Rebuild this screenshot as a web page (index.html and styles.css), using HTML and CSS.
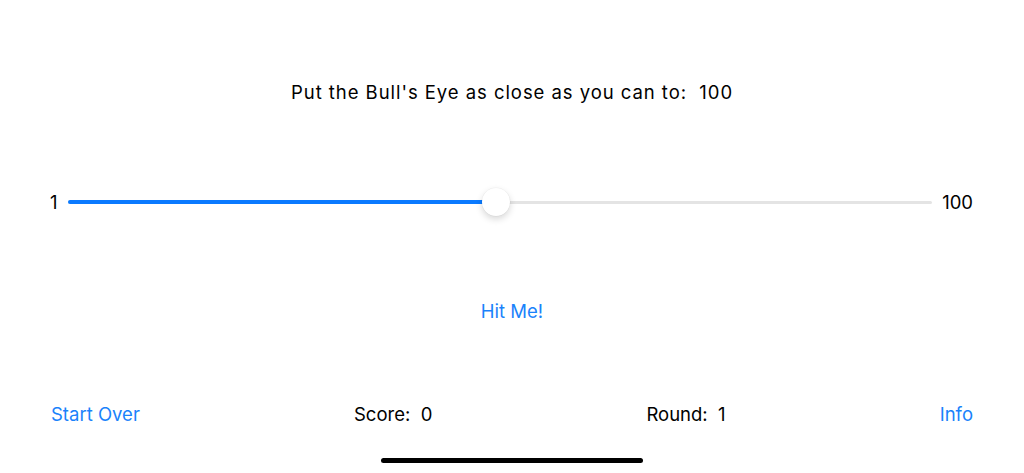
FILE: index.html
```html
<!DOCTYPE html>
<html>
<head>
<meta charset="utf-8">
<link rel="stylesheet" href="styles.css">
</head>
<body>
<div class="screen">
  <div class="title">Put the Bull's Eye as close as you can to:&nbsp; 100</div>
  <div class="slider-row">
    <span class="bound">1</span>
    <div class="track">
      <div class="fill" style="width: 49.5%"></div>
      <div class="thumb" style="left: 49.5%"></div>
    </div>
    <span class="bound">100</span>
  </div>
  <div class="hit">Hit Me!</div>
  <div class="bottom">
    <span class="link">Start Over</span>
    <span class="stat">Score:&nbsp; 0</span>
    <span class="stat">Round:&nbsp; 1</span>
    <span class="link">Info</span>
  </div>
  <div class="home"></div>
</div>
</body>
</html>
```
FILE: styles.css
```css
html, body {
  margin: 0;
  padding: 0;
  background: #ffffff;
}
.screen {
  width: 1024px;
  height: 473px;
  display: flex;
  flex-direction: column;
  font-family: Inter, "Liberation Sans", sans-serif;
  color: #000;
  overflow: hidden;
}
.title {
  margin-top: 80px;
  height: 24px;
  line-height: 24px;
  font-size: 18.5px;
  letter-spacing: 0.95px;
  text-align: center;
}
.slider-row {
  margin-top: 83px;
  height: 30px;
  padding: 0 51px 0 50px;
  display: flex;
  align-items: center;
  gap: 10px;
  font-size: 18.5px;
}
.bound {
  line-height: 30px;
}
.track {
  flex: 1;
  height: 3px;
  background: #e4e4e4;
  border-radius: 2px;
  position: relative;
}
.fill {
  position: absolute;
  left: 0;
  top: -0.5px;
  height: 4px;
  background: #0a7aff;
  border-radius: 2px;
}
.thumb {
  position: absolute;
  top: 50%;
  width: 28px;
  height: 28px;
  margin-left: -14px;
  margin-top: -14px;
  border-radius: 50%;
  background: #fff;
  box-shadow: 0 3px 7px rgba(0,0,0,0.16), 0 0 0 0.5px rgba(0,0,0,0.05);
}
.hit {
  margin-top: 83px;
  height: 22px;
  line-height: 22px;
  text-align: center;
  font-size: 18.5px;
  color: #1a82fb;
}
.bottom {
  margin-top: 81px;
  height: 22px;
  line-height: 22px;
  padding: 0 51px;
  display: flex;
  justify-content: space-between;
  font-size: 18.5px;
}
.link {
  color: #1a82fb;
}
.home {
  margin: 33px auto 0;
  width: 262px;
  height: 5px;
  border-radius: 3px;
  background: #000;
}
```
